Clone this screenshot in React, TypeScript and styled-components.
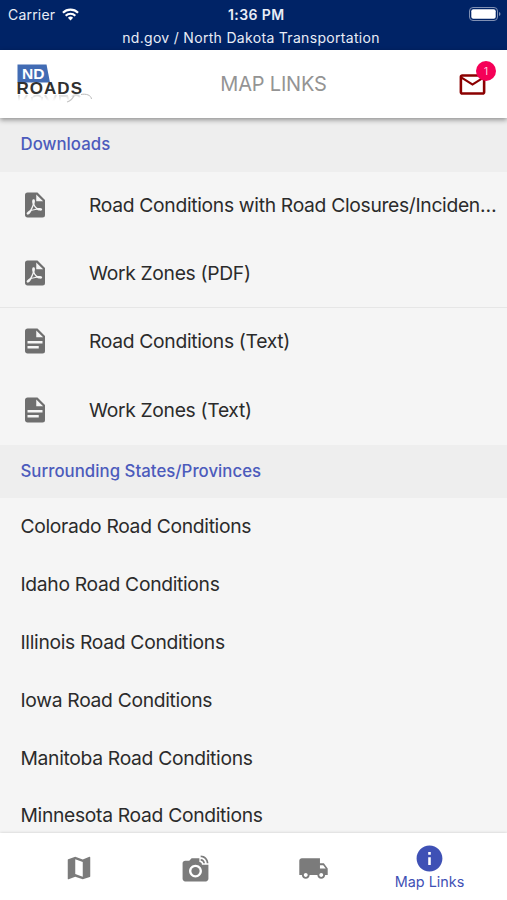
import React from "react";
import styled, { createGlobalStyle } from "styled-components";
import { MdMap, MdLinkedCamera, MdLocalShipping, MdInfo, MdMailOutline } from "react-icons/md";

const Global = createGlobalStyle`
  * { box-sizing: border-box; }
  body { margin: 0; font-family: Inter, "Liberation Sans", sans-serif; background: #f5f5f5; }
`;

const Screen = styled.div`
  height: 900px;
  display: flex;
  flex-direction: column;
  overflow: hidden;
  color: #2b2b2b;
`;

const StatusArea = styled.header`
  flex: none;
  height: 50px;
  background: #002366;
  color: #e9edf6;
`;

const StatusBar = styled.div`
  height: 28px;
  padding: 0 6px 0 8px;
  display: grid;
  grid-template-columns: 220px 1fr 32px;
  align-items: center;
`;

const Carrier = styled.div`
  display: flex;
  align-items: center;
  gap: 7px;
  font-size: 14px;
  letter-spacing: 0.2px;
`;

const Clock = styled.div`
  font-size: 14px;
  font-weight: 600;
  letter-spacing: 0.4px;
`;

const Battery = styled.svg`
  justify-self: end;
`;

const SiteLine = styled.div`
  height: 20px;
  line-height: 20px;
  text-align: center;
  font-size: 14px;
  letter-spacing: 0.31px;
  padding-right: 5px;
`;

const AppBar = styled.div`
  flex: none;
  height: 68px;
  padding: 0 19px 0 15px;
  display: grid;
  grid-template-columns: 80px 1fr 36px;
  align-items: center;
  background: #fff;
  box-shadow: 0 2px 5px rgba(0, 0, 0, 0.4);
  position: relative;
  z-index: 1;
`;

const Title = styled.h1`
  margin: 0;
  text-align: center;
  font-size: 20px;
  font-weight: 400;
  letter-spacing: -0.2px;
  color: #949494;
`;

const Mail = styled.div`
  justify-self: end;
  position: relative;
  display: flex;
  color: #8b0000;
`;

const Badge = styled.span`
  position: absolute;
  left: 19px;
  top: -8px;
  width: 20px;
  height: 20px;
  border-radius: 50%;
  background: #f50057;
  color: #ffd5e3;
  font-size: 10px;
  line-height: 20px;
  text-align: center;
`;

const Content = styled.main`
  flex: 1;
  min-height: 0;
  overflow: hidden;
  background: #f5f5f5;
`;

const SectionTitle = styled.h2<{ $h: number }>`
  margin: 0;
  height: ${(p) => p.$h}px;
  line-height: 52px;
  padding-left: 20.5px;
  background: #eee;
  color: #4c5bbc;
  font-size: 16.8px;
  font-weight: 500;
  letter-spacing: 0.03px;
`;

const Group = styled.div<{ $h: number; $divided?: boolean }>`
  height: ${(p) => p.$h}px;
  padding-top: ${(p) => (p.$divided ? 0 : 0.6)}px;
  border-bottom: ${(p) => (p.$divided ? "1px solid #e6e6e6" : "none")};
`;

const DownloadRow = styled.div`
  height: 68.2px;
  padding: 0 9px 2.5px 20px;
  display: grid;
  grid-template-columns: 30px minmax(0, 1fr);
  column-gap: 39px;
  align-items: center;
  color: #6f6f6f;
`;

const Label = styled.span`
  color: #2b2b2b;
  font-size: 19.3px;
  letter-spacing: -0.32px;
  white-space: nowrap;
  overflow: hidden;
  text-overflow: ellipsis;
`;

const StateRow = styled.div`
  height: 57.85px;
  padding: 0 0 0.6px 20.5px;
  display: flex;
  align-items: center;
`;

const BottomNav = styled.nav`
  flex: none;
  height: 67px;
  padding: 2px 19.5px;
  display: grid;
  grid-template-columns: repeat(4, 117.3px);
  background: #fff;
  box-shadow: 0 0 3px rgba(0, 0, 0, 0.18);
  position: relative;
`;

const NavItem = styled.div<{ $active?: boolean }>`
  display: flex;
  flex-direction: column;
  align-items: center;
  justify-content: center;
  padding: ${(p) => (p.$active ? "0 1px 1px 0" : "3px 0 0 1px")};
  color: ${(p) => (p.$active ? "#3f51b5" : "#7b7b7b")};
  font-size: 14.4px;
  line-height: 15px;
`;

const PdfIcon = () => (
  <svg width="30" height="30" viewBox="0 0 24 24" fill="currentColor">
    <path transform="translate(-1 0)" d="M14,9H19.5L14,3.5V9M7,2H15L21,8V20A2,2 0 0,1 19,22H7C5.89,22 5,21.1 5,20V4A2,2 0 0,1 7,2M11.93,12.44C12.34,13.34 12.86,14.08 13.46,14.59L13.87,14.91C13,15.07 11.8,15.35 10.53,15.84V15.84L10.42,15.88L10.92,14.84C11.37,13.97 11.7,13.18 11.93,12.44M18.41,16.25C18.59,16.07 18.68,15.84 18.69,15.59C18.72,15.39 18.67,15.2 18.57,15.04C18.28,14.57 17.53,14.35 16.29,14.35L15,14.42L14.13,13.84C13.5,13.32 12.93,12.41 12.53,11.28L12.57,11.14C12.9,9.81 13.21,8.2 12.55,7.54C12.39,7.38 12.17,7.3 11.94,7.3H11.7C11.33,7.3 11,7.69 10.91,8.07C10.54,9.4 10.76,10.13 11.13,11.34V11.35C10.88,12.23 10.56,13.25 10.05,14.28L9.09,16.08L8.2,16.57C7,17.32 6.43,18.16 6.32,18.69C6.28,18.88 6.3,19.05 6.37,19.23L6.4,19.28L6.88,19.59L7.32,19.7C8.13,19.7 9.05,18.75 10.29,16.63L10.47,16.56C11.5,16.23 12.78,16 14.5,15.81C15.53,16.32 16.74,16.55 17.5,16.55C17.94,16.55 18.24,16.44 18.41,16.25Z" />
  </svg>
);

const TextIcon = () => (
  <svg width="30" height="30" viewBox="0 0 24 24" fill="currentColor">
    <path d="M13,9H18.5L13,3.5V9M6,2H14L20,8V20A2,2 0 0,1 18,22H6C4.89,22 4,21.1 4,20V4C4,2.89 4.89,2 6,2M15,18V16H6V18H15M18,14V12H6V14H18Z" />
  </svg>
);

const Wifi = () => (
  <svg width="17" height="13" viewBox="0 0 18 13" fill="none" stroke="#fff" strokeWidth="2.3">
    <path d="M1 4.6A11.4 11.4 0 0 1 17 4.6" />
    <path d="M3.9 7.8A7.2 7.2 0 0 1 14.1 7.8" />
    <path d="M9 12.8L6.2 10A4 4 0 0 1 11.8 10Z" fill="#fff" stroke="none" />
  </svg>
);

const Logo = () => (
  <svg width="80" height="42" viewBox="0 0 80 42" fontFamily="Liberation Sans, sans-serif" fontWeight="700">
    <defs>
      <linearGradient id="fade" x1="0" y1="32" x2="0" y2="38" gradientUnits="userSpaceOnUse">
        <stop offset="0" stopColor="#999" stopOpacity="0.35" />
        <stop offset="1" stopColor="#999" stopOpacity="0" />
      </linearGradient>
    </defs>
    <path d="M2.5 1.5H31.5L35 19.5H2.5Z" fill="#426cb4" />
    <text x="7" y="15.8" fontSize="15.5" textLength="22.5" lengthAdjust="spacingAndGlyphs" fill="#fff">ND</text>
    <text x="1.5" y="30.5" fontSize="17" textLength="65.5" lengthAdjust="spacing" fill="#303030">ROADS</text>
    <path
      d="M4 32V39M12 32L9 37M18 34Q22 31 26 34M17 39V34M27 39V34M30 32L34 39M41 32L38 39M45 32V39M46 33H52L54 38M57 34Q61 30 65 34"
      fill="none"
      stroke="url(#fade)"
      strokeWidth="2"
    />
    <path d="M52 39Q56 38 59 33" fill="none" stroke="#c4c4c4" strokeWidth="1.2" />
    <path d="M66 31.5C71 30.5 76 32 76.5 36" fill="none" stroke="#bbb" strokeWidth="1" />
  </svg>
);

const downloads = [
  {
    height: 136,
    rows: [
      { icon: PdfIcon, text: "Road Conditions with Road Closures/Incidents (PDF)" },
      { icon: PdfIcon, text: "Work Zones (PDF)" },
    ],
  },
  {
    height: 137,
    rows: [
      { icon: TextIcon, text: "Road Conditions (Text)" },
      { icon: TextIcon, text: "Work Zones (Text)" },
    ],
  },
];

const states = ["Colorado", "Idaho", "Illinois", "Iowa", "Manitoba", "Minnesota"];

export default function App() {
  return (
    <Screen>
      <Global />
      <StatusArea>
        <StatusBar>
          <Carrier>Carrier <Wifi /></Carrier>
          <Clock>1:36 PM</Clock>
          <Battery width="32" height="14" viewBox="0 0 32 14">
            <rect x="0.5" y="0.5" width="28" height="13" rx="3.5" fill="none" stroke="#8090b3" />
            <rect x="2.3" y="2.3" width="24.4" height="9.4" rx="2" fill="#fff" />
            <path d="M30 5V9Q31.5 8.5 31.5 7T30 5Z" fill="#8090b3" />
          </Battery>
        </StatusBar>
        <SiteLine>nd.gov / North Dakota Transportation</SiteLine>
      </StatusArea>
      <AppBar>
        <Logo />
        <Title>MAP LINKS</Title>
        <Mail>
          <MdMailOutline size={31} />
          <Badge>1</Badge>
        </Mail>
      </AppBar>
      <Content>
        <SectionTitle $h={54}>Downloads</SectionTitle>
        {downloads.map(({ height, rows }, i) => (
          <Group key={i} $h={height} $divided={i === 0}>
            {rows.map(({ icon: Icon, text }) => (
              <DownloadRow key={text}>
                <Icon />
                <Label>{text}</Label>
              </DownloadRow>
            ))}
          </Group>
        ))}
        <SectionTitle $h={52.6}>Surrounding States/Provinces</SectionTitle>
        {states.map((s) => (
          <StateRow key={s}>
            <Label>{s} Road Conditions</Label>
          </StateRow>
        ))}
      </Content>
      <BottomNav>
        <NavItem><MdMap size={30} /></NavItem>
        <NavItem><MdLinkedCamera size={31} /></NavItem>
        <NavItem><MdLocalShipping size={31} /></NavItem>
        <NavItem $active><MdInfo size={31} />Map Links</NavItem>
      </BottomNav>
    </Screen>
  );
}
